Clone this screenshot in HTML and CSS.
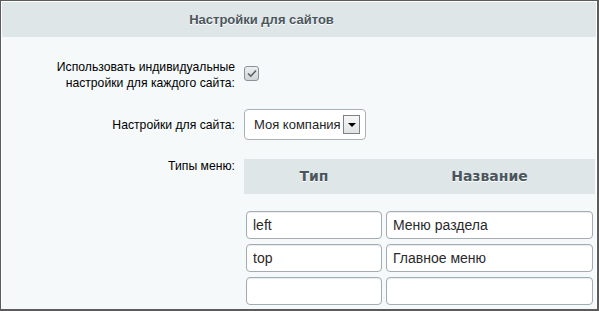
FILE: index.html
```html
<!DOCTYPE html>
<html lang="ru">
<head>
<meta charset="utf-8">
<link rel="stylesheet" href="styles.css">
</head>
<body>
<div class="frame">
  <div class="inner">
    <div class="head">Настройки для сайтов</div>
    <div class="body">
      <div class="row row-check">
        <div class="label">Использовать индивидуальные<br>настройки для каждого сайта:</div>
        <div class="field">
          <span class="checkbox">
            <svg width="10" height="9" viewBox="0 0 10 9"><path d="M1 4.5 L3.8 7.2 L9 1.5" fill="none" stroke="#5c6266" stroke-width="1.6"/></svg>
          </span>
        </div>
      </div>
      <div class="row row-select">
        <div class="label">Настройки для сайта:</div>
        <div class="field">
          <div class="select">
            <span class="select-text">Моя компания</span>
            <span class="select-btn"><span class="tri"></span></span>
          </div>
        </div>
      </div>
      <div class="row row-table">
        <div class="label">Типы меню:</div>
        <div class="field">
          <div class="menu-table">
            <div class="th">Тип</div>
            <div class="th">Название</div>
            <div class="cell"><div class="input">left</div></div>
            <div class="cell"><div class="input">Меню раздела</div></div>
            <div class="cell"><div class="input">top</div></div>
            <div class="cell"><div class="input">Главное меню</div></div>
            <div class="cell"><div class="input"></div></div>
            <div class="cell"><div class="input"></div></div>
          </div>
        </div>
      </div>
    </div>
  </div>
</div>
</body>
</html>
```

FILE: styles.css
```css
html, body {
  margin: 0;
  padding: 0;
  background: #f5f9f9;
}
.frame {
  width: 599px;
  height: 311px;
  box-sizing: border-box;
  border: 1px solid #5b5b5b;
  border-bottom-width: 2px;
  border-right-width: 2px;
  overflow: hidden;
  background: #f5f9f9;
}
.inner {
  border-top: 1px solid #ffffff;
  border-left: 1px solid #ffffff;
  border-right: 1px solid #ffffff;
  height: 100%;
  box-sizing: border-box;
}
.head {
  height: 35px;
  background: #dfe6e8;
  font-family: "Liberation Sans", Arial, sans-serif;
  font-weight: bold;
  font-size: 13px;
  color: #4b565c;
  text-shadow: 0 1px 0 #ffffff;
  line-height: 35px;
  text-align: center;
  padding-right: 75px;
}
.body {
  padding-top: 22px;
  font-family: "Liberation Sans", Arial, sans-serif;
  font-size: 13px;
  color: #000;
}
.row {
  display: grid;
  grid-template-columns: 233px 1fr;
  column-gap: 9px;
}
.label {
  text-align: right;
  line-height: 16px;
  font-size: 12.2px;
}
.row-check .checkbox {
  margin-top: 7px;
  margin-left: 0;
}
.checkbox {
  display: flex;
  align-items: center;
  justify-content: center;
  width: 13px;
  height: 13px;
  border: 1px solid #8c9196;
  border-radius: 3px;
  background: linear-gradient(#eceeef, #cfd4d7);
}
.row-select {
  margin-top: 18px;
  align-items: center;
}
.select {
  display: flex;
  align-items: center;
  justify-content: space-between;
  width: 122px;
  height: 31px;
  box-sizing: border-box;
  border: 1px solid #a9b1b7;
  border-radius: 4px;
  background: #ffffff;
  padding: 0 5px 0 9px;
  color: #1f1f1f;
}
.select-btn {
  display: flex;
  align-items: center;
  justify-content: center;
  width: 17px;
  height: 19px;
  box-sizing: border-box;
  border: 1px solid #7b8186;
  background: linear-gradient(#f7f7f7, #e1e3e4);
}
.tri {
  width: 0;
  height: 0;
  border-left: 4px solid transparent;
  border-right: 4px solid transparent;
  border-top: 4px solid #000;
  margin-top: 1px;
}
.row-table {
  margin-top: 19px;
}
.row-table .label {
  margin-top: -1px;
}
.menu-table {
  display: grid;
  grid-template-columns: 140px 211px;
  width: 351px;
}
.th {
  background: #dfe6e8;
  height: 35px;
  line-height: 35px;
  text-align: center;
  font-family: "DejaVu Sans", Verdana, sans-serif;
  font-weight: bold;
  font-size: 14px;
  color: #4b565c;
  text-shadow: 0 1px 0 #ffffff;
  margin-bottom: 17px;
}
.cell {
  padding: 0 2px 5px 2px;
}
.input {
  height: 28px;
  box-sizing: border-box;
  border: 1px solid #a3acb3;
  border-radius: 4px;
  background: #ffffff;
  box-shadow: inset 0 1px 1px rgba(0,0,0,0.08);
  line-height: 26px;
  padding-left: 6px;
  font-size: 14px;
  color: #2a2a2a;
}
```
